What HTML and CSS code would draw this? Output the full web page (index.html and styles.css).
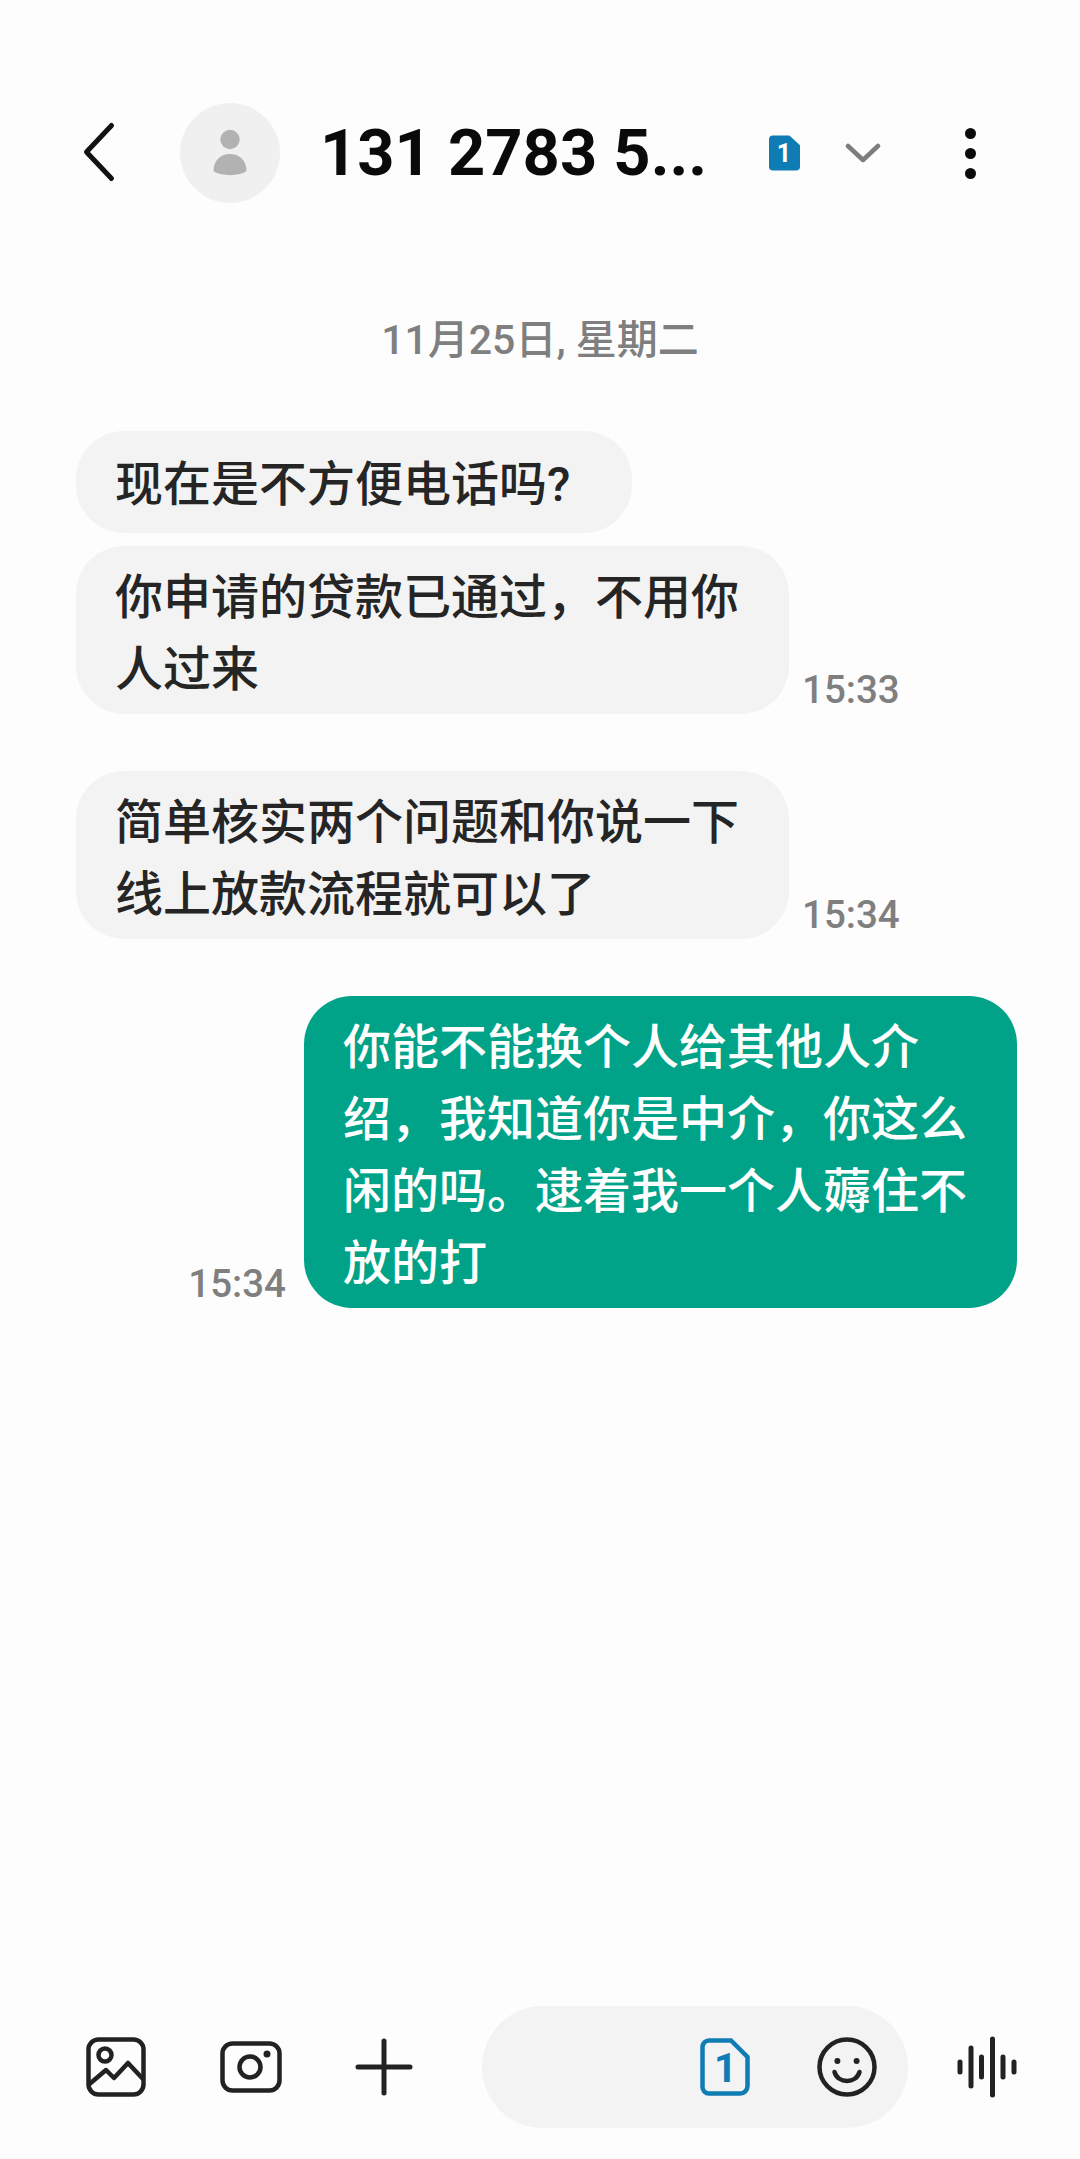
FILE: index.html
```html
<!DOCTYPE html>
<html lang="zh-CN">
<head>
    <meta charset="UTF-8">
    <meta name="viewport" content="width=device-width, initial-scale=1.0">
    <title>131 2783 5...</title>
    <link rel="stylesheet" href="styles.css">
</head>
<body>
    <div class="page">
        <header class="top-bar">
            <svg class="back-icon" viewBox="0 0 36 64" width="36" height="64">
                <path d="M29.5 4.5 L4.5 31 L29.5 57.5" fill="none" stroke="#111" stroke-width="5" stroke-linecap="round" stroke-linejoin="round"/>
            </svg>
            <div class="avatar">
                <svg viewBox="0 0 100 100" width="100" height="100">
                    <circle cx="50" cy="36.5" r="9.7" fill="#b2b2b2"/>
                    <path d="M33.5 68 C33.5 57 41 51 50 51 C59 51 66.5 57 66.5 68 C60 73.5 40 73.5 33.5 68 Z" fill="#b2b2b2"/>
                </svg>
            </div>
            <h1 class="title">131 2783 5...</h1>
            <svg class="sim-badge" viewBox="0 0 32 36" width="31" height="36">
                <path d="M4 0 H21 L32 10 V32 A4 4 0 0 1 28 36 H4 A4 4 0 0 1 0 32 V4 A4 4 0 0 1 4 0 Z" fill="#0f7cb4"/>
                <text x="15.5" y="27.5" text-anchor="middle" class="sim-badge-num">1</text>
            </svg>
            <svg class="chevron" viewBox="0 0 36 20" width="36" height="20">
                <path d="M3 3 L18 17 L33 3" fill="none" stroke="#7d7d7d" stroke-width="4.5" stroke-linecap="round" stroke-linejoin="round"/>
            </svg>
            <div class="more">
                <span class="dot"></span>
                <span class="dot"></span>
                <span class="dot"></span>
            </div>
        </header>

        <div class="date">11月25日, 星期二</div>

        <main class="messages">
            <div class="row">
                <div class="bubble single">现在是不方便电话吗?</div>
            </div>
            <div class="row tight">
                <div class="bubble">你申请的贷款已通过，不用你人过来</div>
                <span class="time">15:33</span>
            </div>
            <div class="row group">
                <div class="bubble">简单核实两个问题和你说一下线上放款流程就可以了</div>
                <span class="time">15:34</span>
            </div>
            <div class="row group sent">
                <span class="time">15:34</span>
                <div class="bubble green">你能不能换个人给其他人介绍，我知道你是中介，你这么闲的吗。逮着我一个人薅住不放的打</div>
            </div>
        </main>

        <footer class="composer">
            <svg class="gallery-icon" viewBox="0 0 60 60" width="60" height="60">
                <rect x="2.5" y="2.5" width="55" height="55" rx="10" fill="none" stroke="#222" stroke-width="4.5"/>
                <circle cx="19" cy="18" r="6.5" fill="none" stroke="#222" stroke-width="4.5"/>
                <path d="M3.5 47 L20 33 L28 41 L42 26 L57 42" fill="none" stroke="#222" stroke-width="4.5" stroke-linejoin="round"/>
            </svg>
            <svg class="camera-icon" viewBox="0 0 62 52" width="62" height="52">
                <rect x="2.5" y="2.5" width="57" height="47" rx="10" fill="none" stroke="#222" stroke-width="4.5"/>
                <circle cx="30" cy="26" r="10.5" fill="none" stroke="#222" stroke-width="4.5"/>
                <circle cx="47" cy="13" r="3.5" fill="#222"/>
            </svg>
            <svg class="plus-icon" viewBox="0 0 58 58" width="58" height="58">
                <path d="M29 3 V55 M3 29 H55" fill="none" stroke="#222" stroke-width="5" stroke-linecap="round"/>
            </svg>
            <div class="input-pill">
                <svg class="sim-outline" viewBox="0 0 50 58" width="50" height="58">
                    <path d="M9 2.5 H31 L47.5 19 V48 A7.5 7.5 0 0 1 40 55.5 H9 A6.5 6.5 0 0 1 2.5 49 V9 A6.5 6.5 0 0 1 9 2.5 Z" fill="none" stroke="#0f7cb4" stroke-width="4.5"/>
                    <text x="25.5" y="44" text-anchor="middle" class="sim-outline-num">1</text>
                </svg>
                <svg class="smile-icon" viewBox="0 0 60 60" width="60" height="60">
                    <circle cx="30" cy="30" r="27.5" fill="none" stroke="#222" stroke-width="4.5"/>
                    <circle cx="20.4" cy="24" r="3" fill="#222"/>
                    <circle cx="39.6" cy="24" r="3" fill="#222"/>
                    <path d="M17.5 35 C21 47 39 47 42.5 35" fill="none" stroke="#222" stroke-width="4.5" stroke-linecap="round"/>
                </svg>
            </div>
            <svg class="voice-icon" viewBox="0 0 62 62" width="62" height="62">
                <path d="M3 26 V36 M14 12 V50 M24.5 21 V41 M35.5 3 V59 M46 21 V41 M57 26 V36" fill="none" stroke="#222" stroke-width="5" stroke-linecap="round"/>
            </svg>
        </footer>
    </div>
</body>
</html>
```

FILE: styles.css
```css
body {
    margin: 0;
    background-color: #fdfdfd;
    font-family: Roboto, "Noto Sans CJK SC", sans-serif;
}
.page {
    display: flex;
    flex-direction: column;
    height: 2159px;
    box-sizing: border-box;
    padding: 103px 0 31px;
}
.top-bar {
    display: flex;
    align-items: center;
    height: 100px;
    padding-left: 82px;
}
.back-icon {
    margin-right: 62px;
}
.avatar {
    width: 100px;
    height: 100px;
    border-radius: 50%;
    background-color: #f0f0f0;
    margin-right: 40px;
}
.title {
    margin: 0;
    width: 449px;
    font-size: 65px;
    font-weight: 700;
    color: #0a0a0a;
    white-space: nowrap;
}
.sim-badge {
    margin-right: 45px;
}
.sim-badge-num {
    font-family: Roboto, sans-serif;
    font-size: 26px;
    font-weight: 700;
    fill: #fff;
}
.chevron {
    margin-right: 84px;
}
.more {
    display: flex;
    flex-direction: column;
    gap: 9px;
}
.dot {
    width: 11px;
    height: 11px;
    border-radius: 50%;
    background-color: #0a0a0a;
}
.date {
    margin-top: 110px;
    text-align: center;
    font-size: 41px;
    font-weight: 500;
    line-height: 54px;
    color: #7f7f7f;
}
.messages {
    display: flex;
    flex-direction: column;
    margin-top: 64px;
    padding: 0 63px 0 76px;
}
.row {
    display: flex;
    align-items: flex-end;
    gap: 13px;
}
.row.tight {
    margin-top: 13px;
}
.row.group {
    margin-top: 57px;
}
.row.sent {
    justify-content: flex-end;
    gap: 18px;
}
.bubble {
    max-width: 713px;
    box-sizing: border-box;
    padding: 16px 41px 8px 39px;
    border-radius: 48px;
    background-color: #f3f3f3;
    color: #252525;
    font-size: 48px;
    font-weight: 500;
    line-height: 72px;
}
.bubble.single {
    padding: 18px 62px 12px 39px;
}
.bubble.green {
    background-color: #00a388;
    color: #fff;
}
.time {
    padding-bottom: 1px;
    font-size: 38.5px;
    font-weight: 500;
    line-height: 46px;
    color: #7f7f7f;
}
.composer {
    display: flex;
    align-items: center;
    margin-top: auto;
    padding-left: 86px;
}
.gallery-icon {
    margin-right: 74px;
}
.camera-icon {
    margin-right: 73px;
}
.plus-icon {
    margin-right: 69px;
}
.input-pill {
    display: flex;
    align-items: center;
    justify-content: flex-end;
    gap: 67px;
    width: 426px;
    height: 122px;
    box-sizing: border-box;
    padding-right: 31px;
    border-radius: 61px;
    background-color: #f3f3f3;
    margin-right: 49px;
}
.sim-outline-num {
    font-family: Roboto, sans-serif;
    font-size: 40px;
    font-weight: 700;
    fill: #0f7cb4;
}
```
